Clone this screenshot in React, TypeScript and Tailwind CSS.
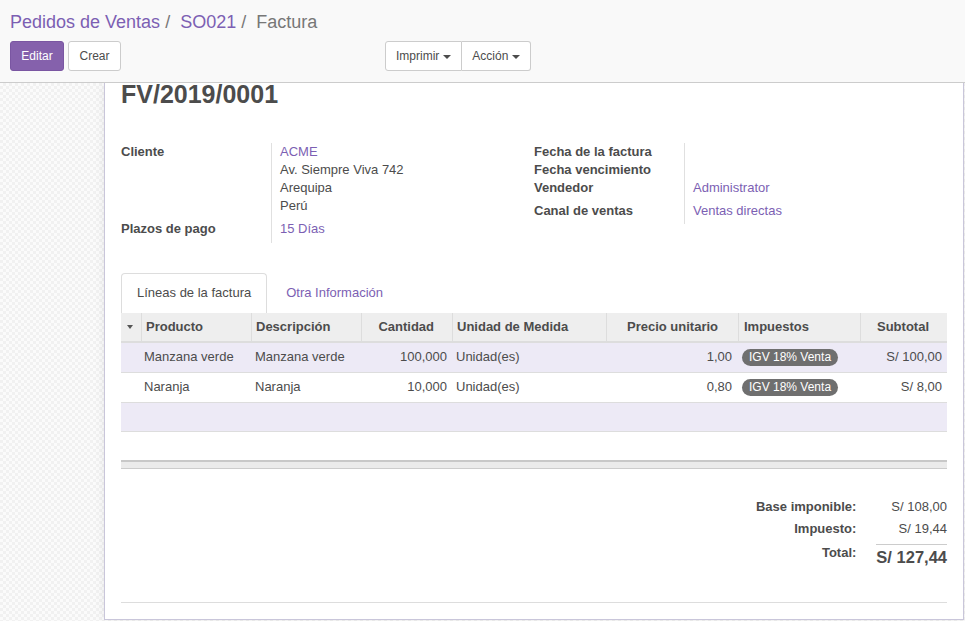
import React from 'react';

const cols = 'grid grid-cols-[20px_110px_110px_91px_154px_132px_122px_87px]';

const lines = [
  { product: 'Manzana verde', desc: 'Manzana verde', qty: '100,000', uom: 'Unidad(es)', price: '1,00', tax: 'IGV 18% Venta', subtotal: 'S/ 100,00' },
  { product: 'Naranja', desc: 'Naranja', qty: '10,000', uom: 'Unidad(es)', price: '0,80', tax: 'IGV 18% Venta', subtotal: 'S/ 8,00' }
];

const Caret = () => (
  <span className="inline-block w-0 h-0 ml-[4px] align-middle border-x-[4px] border-x-transparent border-t-[4px] border-t-[#4c4c4c]" />
);

const ControlPanel = () => (
  <div className="h-[83px] shrink-0 bg-[#f9f9f9] border-b border-[#cccccc] px-[10px]">
    <div className="pt-[10px] text-[18px] leading-[24px] text-[#777]">
      <span className="text-[#7c5fb3]">Pedidos de Ventas</span>
      <span className="px-[5px]">/&nbsp;</span>
      <span className="text-[#7c5fb3]">SO021</span>
      <span className="px-[5px]">/&nbsp;</span>
      <span>Factura</span>
    </div>
    <div className="mt-[7px] flex text-[12px] leading-[18px]">
      <div className="w-[375px] flex gap-[4px]">
        <button className="w-[54px] h-[30px] rounded-[3px] bg-[#8561ac] border border-[#7a56a2] text-white">Editar</button>
        <button className="w-[53px] h-[30px] rounded-[3px] bg-white border border-[#cccccc] text-[#4c4c4c]">Crear</button>
      </div>
      <div className="flex">
        <button className="h-[30px] px-[10px] rounded-l-[3px] bg-white border border-[#cccccc] text-[#4c4c4c]">
          Imprimir<Caret />
        </button>
        <button className="h-[30px] px-[10px] rounded-r-[3px] bg-white border border-l-0 border-[#cccccc] text-[#4c4c4c]">
          Acción<Caret />
        </button>
      </div>
    </div>
  </div>
);

const Field = ({ label, children }: { label: string; children?: React.ReactNode }) => (
  <div className="flex">
    <div className="w-[150px] shrink-0 font-bold">{label}</div>
    <div className="flex-1 border-l border-[#e0e0e0] pl-[8px]">{children}</div>
  </div>
);

const Groups = () => (
  <div className="mt-[38px] flex items-start leading-[18px]">
    <div className="w-[413px]">
      <Field label="Cliente">
        <div className="text-[#7c5fb3]">ACME</div>
        <div>Av. Siempre Viva 742</div>
        <div>Arequipa</div>
        <div>Perú</div>
      </Field>
      <div className="flex">
        <div className="w-[150px] shrink-0 font-bold pt-[5px]">Plazos de pago</div>
        <div className="flex-1 border-l border-[#e0e0e0] pl-[8px] pt-[5px] pb-[5px] text-[#7c5fb3]">15 Días</div>
      </div>
    </div>
    <div className="w-[413px]">
      <Field label="Fecha de la factura">&nbsp;</Field>
      <Field label="Fecha vencimiento">&nbsp;</Field>
      <Field label="Vendedor"><span className="text-[#7c5fb3]">Administrator</span></Field>
      <div className="flex">
        <div className="w-[150px] shrink-0 font-bold pt-[5px]">Canal de ventas</div>
        <div className="flex-1 border-l border-[#e0e0e0] pl-[8px] pt-[5px] pb-[4px] text-[#7c5fb3]">Ventas directas</div>
      </div>
    </div>
  </div>
);

const Tabs = () => (
  <div className="mt-[30px] flex h-[40px] leading-[18px]">
    <div className="px-[15px] pt-[10px] border border-b-0 border-[#dddddd] rounded-t-[4px] bg-white">Líneas de la factura</div>
    <div className="ml-[2px] px-[17px] pt-[11px] text-[#7c5fb3]">Otra Información</div>
  </div>
);

const LinesTable = () => (
  <div>
    <div className={`${cols} h-[30px] bg-[#eeeeee] border-b-2 border-[#dddddd] font-bold items-stretch`}>
      <div className="flex items-center justify-center pr-[2px]">
        <span className="w-0 h-0 border-x-[3px] border-x-transparent border-t-[4px] border-t-[#555]" />
      </div>
      <div className="border-l border-[#dddddd] pl-[4px] flex items-center">Producto</div>
      <div className="border-l border-[#dddddd] pl-[4px] flex items-center">Descripción</div>
      <div className="border-l border-[#dddddd] pr-[18px] flex items-center justify-end">Cantidad</div>
      <div className="border-l border-[#dddddd] pl-[4px] flex items-center">Unidad de Medida</div>
      <div className="border-l border-[#dddddd] pr-[20px] flex items-center justify-end">Precio unitario</div>
      <div className="border-l border-[#dddddd] pl-[5px] flex items-center">Impuestos</div>
      <div className="border-l border-[#dddddd] pr-[18px] flex items-center justify-end">Subtotal</div>
    </div>
    {lines.map((l, i) => (
      <div key={l.product} className={`${cols} h-[30px] pb-[1px] border-b border-[#dddddd] items-center ${i === 0 ? 'bg-[#edeaf6]' : 'bg-white'}`}>
        <div />
        <div className="pl-[3px]">{l.product}</div>
        <div className="pl-[4px]">{l.desc}</div>
        <div className="pr-[5px] text-right">{l.qty}</div>
        <div className="pl-[4px]">{l.uom}</div>
        <div className="pr-[6px] text-right">{l.price}</div>
        <div className="pl-[4px] flex">
          <span className="h-[17px] px-[7px] rounded-full bg-[#6f6f6f] text-white text-[12px] leading-[17px]">{l.tax}</span>
        </div>
        <div className="pr-[5px] text-right">{l.subtotal}</div>
      </div>
    ))}
    <div className="h-[29px] bg-[#edeaf6] border-b border-[#dddddd]" />
    <div className="mt-[28px] h-[9px] border-t-2 border-[#c8c8c8] border-b border-b-[#cccccc] bg-[#ebebeb]" />
  </div>
);

const Totals = () => (
  <div className="mt-[27px] flex justify-end">
    <div className="grid grid-cols-[auto_auto] leading-[22px]">
      <div className="pr-[20px] text-right font-bold">Base imponible:</div>
      <div className="text-right">S/ 108,00</div>
      <div className="pr-[20px] text-right font-bold">Impuesto:</div>
      <div className="text-right">S/ 19,44</div>
      <div className="mt-[4px] pr-[20px] text-right font-bold leading-[18px]">Total:</div>
      <div className="mt-[4px] border-t border-[#cccccc] text-right font-bold text-[16.5px] leading-[24px]">S/ 127,44</div>
    </div>
  </div>
);

export default function App() {
  return (
    <div className="w-[965px] h-[621px] overflow-hidden flex flex-col bg-white text-[13px] text-[#4c4c4c] font-['Liberation_Sans',Arial,sans-serif]">
      <ControlPanel />
      <div className="flex-1 min-h-0 overflow-hidden bg-[conic-gradient(#f1f1f1_25%,#fbfbfb_0_50%,#f1f1f1_0_75%,#fbfbfb_0)] bg-[length:6px_6px]">
        <div className="ml-[104px] mr-[1px] h-[537px] flex flex-col bg-white border-x border-b border-[#c9c6da] shadow-[0_0_10px_rgba(0,0,0,0.08)] px-[16px] pb-[16px]">
          <h1 className="text-[25px] leading-[22px] font-bold text-[#4c4c4c]">FV/2019/0001</h1>
          <Groups />
          <Tabs />
          <LinesTable />
          <Totals />
          <div className="mt-auto border-t border-[#dddddd]" />
        </div>
      </div>
    </div>
  );
}
